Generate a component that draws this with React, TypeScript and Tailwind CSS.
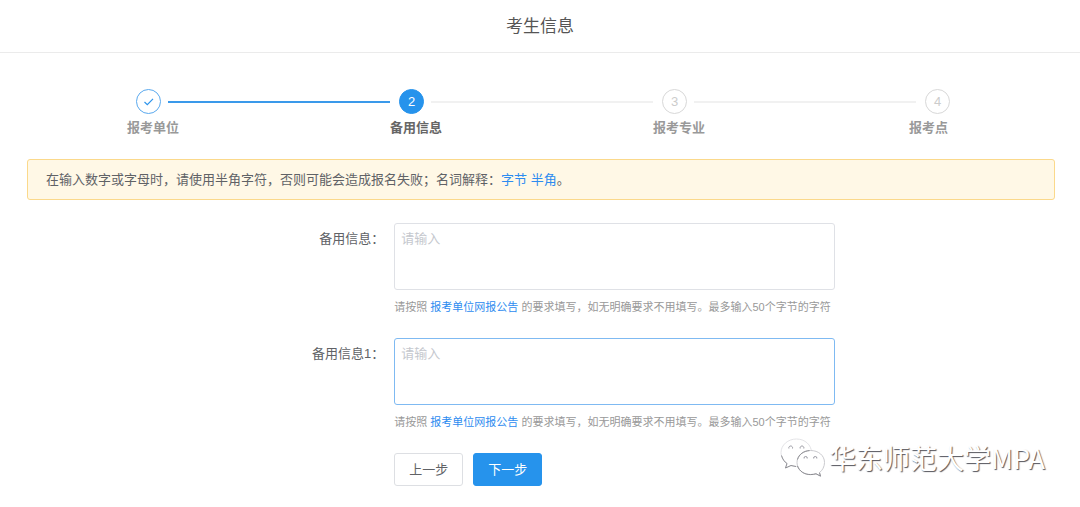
import React from 'react'

interface Step {
  title: string
  status: 'done' | 'current' | 'wait'
}

interface Field {
  id: string
  label: string
  active: boolean
}

const steps: Step[] = [
  { title: '报考单位', status: 'done' },
  { title: '备用信息', status: 'current' },
  { title: '报考专业', status: 'wait' },
  { title: '报考点', status: 'wait' },
]

const fields: Field[] = [
  { id: 'extra', label: '备用信息：', active: false },
  { id: 'extra1', label: '备用信息1：', active: true },
]

const circleStyles = {
  done: 'border-[#5aa9ee] text-[#2d94ec]',
  current: 'border-[#2693ec] bg-[#2693ec] text-white',
  wait: 'border-[#d8d8d8] text-[#cccccc]',
}

const StepBar: React.FC = () => (
  <ol className="flex pl-[108px] pr-[104px] pt-9">
    {steps.map((step, index) => {
      const last = index === steps.length - 1
      return (
        <li key={step.title} className={last ? 'w-[25px] flex-none' : 'flex-1'}>
          <div className="flex items-center">
            <span
              className={`flex h-[25px] w-[25px] flex-none items-center justify-center rounded-full border text-[13px] leading-none ${circleStyles[step.status]}`}
            >
              {step.status === 'done' ? (
                <svg viewBox="0 0 10 10" className="h-[10px] w-[10px]" fill="none" stroke="currentColor" strokeWidth="1.2">
                  <path d="M0.5 5 L3.3 7.6 L9 1.8" />
                </svg>
              ) : (
                index + 1
              )}
            </span>
            {!last && (
              <span
                className={`ml-[7px] mr-[9px] h-[2px] flex-1 ${step.status === 'done' ? 'bg-[#3a99ea]' : 'bg-[#f1f1f1]'}`}
              />
            )}
          </div>
          <div
            className={`mt-1 whitespace-nowrap text-[13px] font-bold leading-5 ${last ? '-ml-4' : '-ml-[9px]'} ${
              step.status === 'current' ? 'text-[#666666]' : 'text-[#999999]'
            }`}
          >
            {step.title}
          </div>
        </li>
      )
    })}
  </ol>
)

const FormRow: React.FC<{ field: Field }> = ({ field }) => (
  <div className="mb-[21px] flex">
    <label
      htmlFor={field.id}
      className="w-[35.7%] flex-none pr-[10px] pt-[6px] text-right text-[13px] leading-5 text-[#606266]"
    >
      {field.label}
    </label>
    <div className="w-[43%]">
      <textarea
        id={field.id}
        placeholder="请输入"
        className={`block h-[67px] w-full resize-none rounded-[3px] border px-[6px] py-[5px] text-[13px] leading-5 text-[#606266] outline-none placeholder:text-[#c5c8ce] ${
          field.active ? 'border-[#7fbaf2]' : 'border-[#dfe1e6]'
        }`}
      />
      <p className="mt-[7px] whitespace-nowrap text-[11px] leading-5 text-[#999999]">
        请按照{' '}
        <a href="#notice" className="text-[#2d8cf0]">
          报考单位网报公告
        </a>{' '}
        的要求填写，如无明确要求不用填写。最多输入50个字节的字符
      </p>
    </div>
  </div>
)

const Watermark: React.FC = () => (
  <div className="pointer-events-none absolute right-[35px] top-[437px] flex items-center gap-1">
    <svg viewBox="0 0 45 42" className="h-[42px] w-[45px]">
      <g fill="white" strokeLinejoin="round">
        <path
          d="M16.5 2 C8 2 1 8 1 15.500 C1 20 3.500 24 7 26.500 L5.500 31 L11 28.500 C13 29.200 15 29.500 17 29.500 C25 29.500 31.500 23.500 31.500 15.500 C31.500 8 25 2 16.500 2 Z"
          stroke="#dcdcdf"
          strokeWidth="0.8"
        />
        <path
          d="M30.5 13.500 C23 13.500 17 18.500 17 25.500 C17 32.500 23 37.500 30.500 37.500 C32.500 37.500 34.300 37.200 36 36.700 L40.500 39 L39.500 35.500 C42.500 33.500 44.500 29.500 44.500 25.500 C44.500 18.500 38.500 13.500 30.500 13.500 Z"
          stroke="#c4c4c8"
          strokeWidth="0.9"
        />
      </g>
      <g fill="none" stroke="#85858a" strokeWidth="0.9" strokeLinejoin="round">
        <path d="M1.500 18.500 C2.500 22 4.500 25 7 26.500 L5.500 31 L11 28.500 L16 29.500" />
        <path d="M17.500 29 C19.500 34.500 24.500 37.600 30.500 37.600 C32.500 37.600 34.300 37.300 36 36.800 L40.500 39.200 L39.500 35.700" />
        <path d="M17.500 22.500 C19 17.500 23.500 14 29.500 13.600" />
      </g>
      <g fill="none" stroke="#8f8f98" strokeWidth="0.9">
        <path d="M8.900 11.500 A1.900 1.900 0 1 1 12.500 11.500" />
        <path d="M20.200 11.500 A1.900 1.900 0 1 1 23.800 11.500" />
        <path d="M24.100 21.500 A1.600 1.600 0 1 1 27.200 21.500" />
        <path d="M33.700 21.500 A1.600 1.600 0 1 1 36.800 21.500" />
      </g>
    </svg>
    <span className="font-['Noto_Sans_CJK_SC',sans-serif] text-[27px] leading-10 text-white [text-shadow:1px_1px_1px_#55555c]">
      华东师范大学MPA
    </span>
  </div>
)

const App: React.FC = () => {
  return (
    <div className="relative min-h-screen bg-white font-['Liberation_Sans','Noto_Sans_CJK_SC',sans-serif]">
      <header className="flex h-[53px] items-center justify-center border-b border-[#ebebeb] pt-[2px]">
        <h1 className="text-[17px] leading-6 text-[#555555]">考生信息</h1>
      </header>

      <main className="pl-7 pr-[26px]">
        <StepBar />

        <div className="-mx-px mt-[21px] rounded-[3px] border border-[#fbd98b] bg-[#fff8e6] px-[18px] pb-[9px] pt-[10px] text-[13px] leading-5 text-[#606266]">
          在输入数字或字母时，请使用半角字符，否则可能会造成报名失败；名词解释：
          <a href="#byte" className="text-[#2d8cf0]">字节</a>{' '}
          <a href="#half-width" className="text-[#2d8cf0]">半角</a>。
        </div>

        <form className="mt-[23px]">
          {fields.map(field => (
            <FormRow key={field.id} field={field} />
          ))}
          <div className="flex gap-[10px] pl-[35.7%]">
            <button
              type="button"
              className="h-[33px] rounded-[3px] border border-[#dddfe3] bg-white px-[14px] text-[13px] text-[#606266]"
            >
              上一步
            </button>
            <button
              type="button"
              className="h-[33px] rounded-[3px] border border-[#2693ec] bg-[#2693ec] px-[14px] text-[13px] text-white"
            >
              下一步
            </button>
          </div>
        </form>
      </main>

      <Watermark />
    </div>
  )
}

export default App
